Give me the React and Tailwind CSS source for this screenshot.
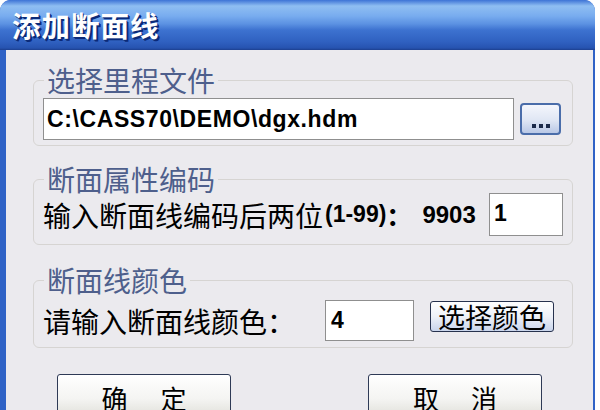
import React from "react";

const cjk = { fontFamily: '"Noto Sans CJK SC", "Noto Sans", sans-serif' };
const lat = { fontFamily: '"Liberation Sans", Arial, sans-serif' };

function Group({ title, children, className = "" }) {
  return (
    <fieldset
      className={
        "ml-[27px] w-[540px] rounded-[6px] border border-[#d6d4d2] px-[9px] " + className
      }
    >
      <legend
        className="ml-[1px] px-[3px] text-[28px] leading-[28px] text-[#4e5f8c]"
        style={cjk}
      >
        {title}
      </legend>
      {children}
    </fieldset>
  );
}

export default function App() {
  return (
    <div className="w-[600px] h-[410px] overflow-hidden bg-white">
      <div className="w-[595px] h-[430px] flex flex-col rounded-t-[11px] overflow-hidden bg-[#2f62c6]">
        {/* title bar */}
        <div className="h-[50px] shrink-0 flex items-center pl-[12px] bg-[linear-gradient(to_bottom,#3d73d6_0px,#8fbef2_6px,#78acef_16px,#5b91e2_24px,#3d72d0_30px,#2f60c0_42px,#2653b0_48px,#1d3f8f_50px)]">
          <span
            className="text-[28.5px] font-bold tracking-[1px] text-white leading-none [text-shadow:2px_2px_0_#0b2a78,1px_1px_0_#0b2a78]"
            style={cjk}
          >
            添加断面线
          </span>
        </div>
        {/* body */}
        <div className="flex-1 ml-[6px] mr-[2px] bg-[#ebeaee] flex flex-col pt-[16px]">
          <Group title="选择里程文件" className="pb-[5px] pt-[4px]">
            <div className="flex items-center">
              <div
                className="w-[471px] h-[42px] bg-white border border-[#8f8f8f] flex items-center pl-[3px] text-[23px] tracking-[0.6px] font-bold text-black"
                style={lat}
              >
                C:\CASS70\DEMO\dgx.hdm
              </div>
              <div className="ml-[6px] w-[41px] h-[32px] rounded-[4px] border-2 border-[#4a6daa] bg-[linear-gradient(to_bottom,#f4f6fc,#dfe6f4_55%,#b9c8e6)] flex items-end justify-center pb-[5px] gap-[3px]">
                <span className="w-[4px] h-[4px] bg-[#1b2a4a]" />
                <span className="w-[4px] h-[4px] bg-[#1b2a4a]" />
                <span className="w-[4px] h-[4px] bg-[#1b2a4a]" />
              </div>
            </div>
          </Group>

          <Group title="断面属性编码" className="mt-[19px] pb-[8px]">
            <div className="flex items-center h-[43px]">
              <span className="w-[282px] text-[28px] leading-none text-black" style={cjk}>
                输入断面线编码后两位
              </span>
              <span className="text-[23px] font-bold leading-none text-black" style={lat}>
                (1-99)
              </span>
              <span className="text-[26px] font-bold leading-none text-black" style={cjk}>
                ：
              </span>
              <span className="ml-[10px] text-[24px] font-bold leading-none text-black" style={lat}>
                9903
              </span>
              <div
                className="ml-auto w-[74px] h-[43px] bg-white border border-[#8f8f8f] flex items-center pl-[4px] pb-[3px] text-[23px] font-bold text-black"
                style={lat}
              >
                1
              </div>
            </div>
          </Group>

          <Group title="断面线颜色" className="mt-[21px] pt-[6px] pb-[6px]">
            <div className="flex items-center h-[41px]">
              <span className="w-[282px] text-[28px] leading-none text-black" style={cjk}>
                请输入断面线颜色：
              </span>
              <div
                className="w-[89px] h-[41px] bg-white border border-[#8f8f8f] flex items-center pl-[5px] text-[23px] font-bold text-black"
                style={lat}
              >
                4
              </div>
              <div
                className="ml-[16px] mb-[8px] w-[124px] h-[31px] rounded-[3px] border-[1.5px] border-[#27324e] bg-[linear-gradient(to_bottom,#ffffff,#eef1f8_50%,#c9d5ec)] flex items-center justify-center text-[27px] leading-none text-black"
                style={cjk}
              >
                选择颜色
              </div>
            </div>
          </Group>

          <div className="mt-[26px] flex">
            <div
              className="ml-[51px] w-[174px] h-[42px] rounded-[3px] border border-[#2e3a56] bg-[linear-gradient(to_bottom,#ffffff,#f4f4f2_60%,#e2e2dc)] flex items-center justify-center gap-[33px] pt-[6px] text-[26px] leading-none text-black"
              style={cjk}
            >
              <span>确</span>
              <span>定</span>
            </div>
            <div
              className="ml-[137px] w-[174px] h-[42px] rounded-[3px] border border-[#2e3a56] bg-[linear-gradient(to_bottom,#ffffff,#f4f4f2_60%,#e2e2dc)] flex items-center justify-center gap-[32px] pt-[6px] text-[26px] leading-none text-black"
              style={cjk}
            >
              <span>取</span>
              <span>消</span>
            </div>
          </div>
        </div>
      </div>
    </div>
  );
}
